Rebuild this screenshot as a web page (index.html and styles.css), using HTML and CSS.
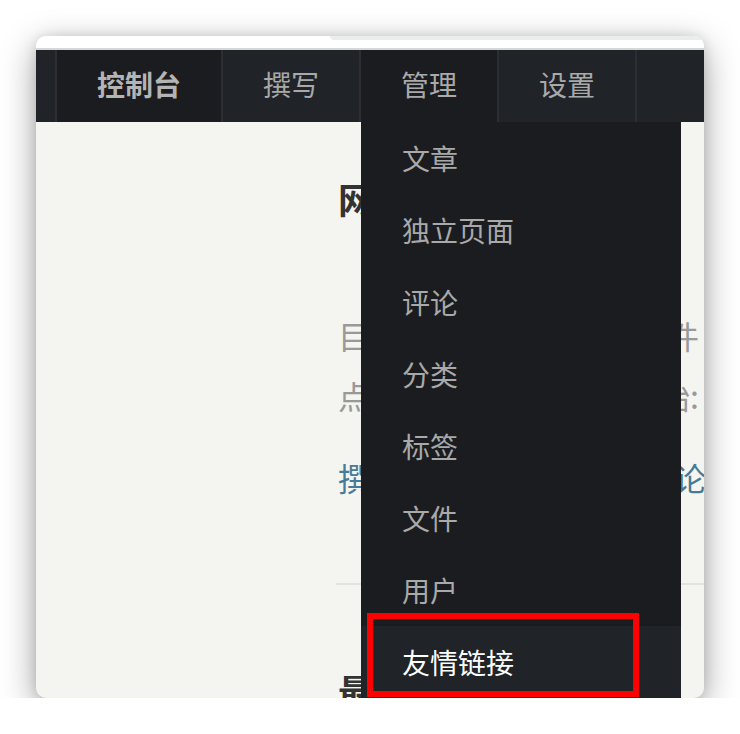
FILE: index.html
```html
<!DOCTYPE html>
<html lang="zh-CN">
<head>
<meta charset="utf-8">
<title>控制台</title>
<link rel="stylesheet" href="styles.css">
</head>
<body>
<div class="window">
  <div class="chrome"><div class="chrome-tab"></div></div>
  <nav class="topnav">
    <div class="brand"></div>
    <ul class="menu">
      <li class="menu-item current">控制台</li>
      <li class="menu-item">撰写</li>
      <li class="menu-item open">管理
        <ul class="dropdown">
          <li>文章</li>
          <li>独立页面</li>
          <li>评论</li>
          <li>分类</li>
          <li>标签</li>
          <li>文件</li>
          <li>用户</li>
          <li class="hover">友情链接</li>
        </ul>
      </li>
      <li class="menu-item">设置</li>
    </ul>
  </nav>
  <main class="body">
    <section class="summary">
      <h3 class="title">网站概要</h3>
      <p class="intro">目前有 1 篇文章, 3 个附件</p>
      <p class="intro">点击下面的链接快速开始:</p>
      <ul class="start-links">
        <li><a href="#">撰写新文章</a></li>
        <li><a href="#">待审核评论</a></li>
      </ul>
    </section>
    <hr class="divider">
    <h3 class="title recent">最近发布的文章</h3>
  </main>
  <div class="highlight"></div>
</div>
</body>
</html>
```

FILE: styles.css
```css
* { box-sizing: border-box; }

html, body {
  margin: 0;
  padding: 0;
  background: #ffffff;
}

body {
  font-family: "Noto Sans CJK SC", "Noto Sans", sans-serif;
}

.window {
  position: relative;
  width: 668px;
  height: 662px;
  margin: 36px 0 0 36px;
  border-radius: 10px;
  overflow: hidden;
  background: #f4f4f0;
  box-shadow: 0 10px 34px rgba(0, 0, 0, 0.38), 0 0 12px rgba(0, 0, 0, 0.1);
}

.chrome {
  display: flex;
  height: 14px;
  background: #ffffff;
  border-bottom: 2px solid #d7d7d7;
}

.chrome-tab {
  flex: 1;
  height: 4px;
  margin-left: 294px;
  background: #e9edeb;
  border-bottom-left-radius: 6px;
}

.topnav {
  display: flex;
  height: 72px;
  background: #202328;
}

.brand {
  width: 21px;
  border-right: 2px solid #2b2e34;
}

.menu {
  display: flex;
  margin: 0;
  padding: 0;
  list-style: none;
}

.menu-item {
  position: relative;
  padding: 0 40px;
  font-size: 28px;
  line-height: 69px;
  color: #a9a9a9;
  border-right: 2px solid #2b2e34;
  white-space: nowrap;
}

.menu-item.current {
  background: #1b1c20;
  color: #b4b4b4;
  font-weight: 700;
}

.menu-item.open {
  background: #1b1c20;
}

.dropdown {
  position: absolute;
  top: 72px;
  left: 0;
  z-index: 5;
  width: 320px;
  margin: 0;
  padding: 0;
  list-style: none;
  background: #1b1c20;
}

.dropdown li {
  height: 72px;
  padding-left: 41px;
  font-size: 28px;
  font-weight: 400;
  line-height: 72px;
  color: #a9a9a9;
}

.dropdown li.hover {
  background: #202328;
  color: #ffffff;
}

.body {
  padding-left: 300px;
}

.summary {
  padding-left: 2px;
}

.title {
  margin: 0;
  font-size: 36px;
  line-height: 36px;
  font-weight: 700;
  color: #333333;
  white-space: nowrap;
}

.summary .title {
  padding-top: 58px;
}

.intro {
  margin: 0;
  font-size: 32px;
  line-height: 60px;
  color: #999999;
  white-space: nowrap;
}

.summary .title + .intro {
  margin-top: 89px;
}

.start-links {
  display: flex;
  margin: 22px 0 0;
  padding: 0;
  list-style: none;
  font-size: 32px;
  line-height: 60px;
  white-space: nowrap;
}

.start-links li {
  margin-right: 1.5em;
}

.start-links a {
  color: #467b96;
  text-decoration: none;
}

.divider {
  margin: 76px 0 0;
  border: 0;
  height: 2px;
  background: #e2e2e0;
}

.recent {
  margin-top: 87px;
  padding-left: 2px;
}

.highlight {
  position: absolute;
  left: 331px;
  top: 577px;
  z-index: 10;
  width: 272px;
  height: 84px;
  border: 6px solid #ff0000;
}
```
